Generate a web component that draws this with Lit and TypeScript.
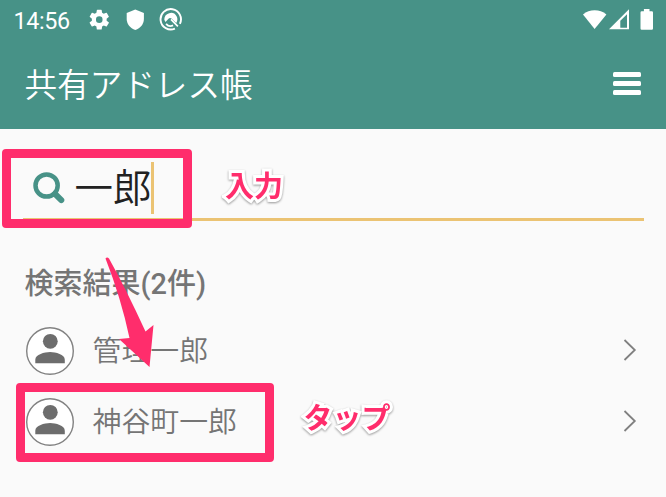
import { LitElement, html, css } from "lit";
import { customElement, property } from "lit/decorators.js";

@customElement("status-bar")
class StatusBar extends LitElement {
  static styles = css`
    :host { display: flex; height: 40px; box-sizing: border-box; align-items: center; padding-left: 13.5px; color: #fff; font: 23.3px "Roboto", sans-serif; }
    .time { width: 75.5px; line-height: 40px; padding-top: 1px; letter-spacing: -0.35px; box-sizing: border-box; }
    svg { display: block; flex: none; }
    .left { width: 93px; height: 40px; }
    .right { width: 76px; height: 40px; margin-left: auto; margin-right: 7px; }
  `;
  render() {
    return html`
      <span class="time">14:56</span>
      <svg class="left" viewBox="89 0 93 40" fill="#fff">
        <g transform="translate(86.9 7.3) scale(1.03)">
          <path d="M19.14 12.94c.04-.3.06-.61.06-.94 0-.32-.02-.64-.07-.94l2.03-1.58a.49.49 0 0 0 .12-.61l-1.92-3.32a.49.49 0 0 0-.59-.22l-2.39.96a7 7 0 0 0-1.62-.94l-.36-2.54a.48.48 0 0 0-.48-.41h-3.84a.47.47 0 0 0-.47.41l-.36 2.54c-.59.24-1.13.57-1.62.94l-2.39-.96a.48.48 0 0 0-.59.22L2.74 8.87a.47.47 0 0 0 .12.61l2.03 1.58c-.05.3-.09.63-.09.94s.02.64.07.94l-2.03 1.58a.49.49 0 0 0-.12.61l1.92 3.32c.12.22.37.29.59.22l2.39-.96c.5.38 1.03.7 1.62.94l.36 2.54c.05.24.24.41.48.41h3.84c.24 0 .44-.17.47-.41l.36-2.54c.59-.24 1.13-.56 1.62-.94l2.39.96c.22.08.47 0 .59-.22l1.92-3.32a.47.47 0 0 0-.12-.61zM12 15.2a3.2 3.2 0 1 1 0-6.4 3.2 3.2 0 0 1 0 6.4z"/>
        </g>
        <path d="M135.3 9.6l8.6 3.4v6c0 5-3.4 9.2-8.6 11-5.2-1.800-8.600-6-8.600-11v-6z"/>
        <path d="M174.900 28.600a10.200 10.200 0 1 1 5-4.800" fill="none" stroke="#fff" stroke-width="1.900"/>
        <path d="M164.300 19.600a6.600 6.600 0 0 1 12.300-3.400c1.300 2.500.9 4.800-.4 6.700l-4.700-4.300c-1-.9-2-.9-3 .1l-3 3.200a6 6 0 0 1-1.200-2.300z"/>
        <path d="M171 19.300l6.900 7M166.100 23.900c1.700 2.100 4.300 2.700 7 1.500" fill="none" stroke="#fff" stroke-width="1.700"/>
      </svg>
      <svg class="right" viewBox="583 0 76 40" fill="#fff">
        <path d="M594.600 29L582.900 14.500a18.500 18.500 0 0 1 23.500 0z"/>
        <path fill-rule="evenodd" d="M609 29.300L629 9.200v20.100zM620.300 20.800v6.900h6.700V14.200z"/>
        <path d="M641.700 11.200h2.200V9h5.600v2.200h2.300a1.200 1.200 0 0 1 1.200 1.200v16.200a1.200 1.200 0 0 1-1.200 1.200h-10.100a1.200 1.200 0 0 1-1.200-1.200V12.400a1.200 1.200 0 0 1 1.200-1.200z"/>
      </svg>`;
  }
}

@customElement("contact-row")
class ContactRow extends LitElement {
  @property() name = "";
  static styles = css`
    :host { display: flex; align-items: center; height: 71.3px; }
    .avatar { width: 48px; height: 48px; flex: none; }
    .name { margin-left: 19px; flex: 1; font-size: 28.9px; line-height: 40px; color: #757575; font-weight: 350; padding-bottom: 1px; }
    .chevron { width: 16px; height: 24px; margin: -2px 7px 0 0; }
  `;
  render() {
    return html`
      <svg class="avatar" viewBox="0 0 48 48">
        <circle cx="24" cy="24" r="23.3" fill="#fff" stroke="#828282" stroke-width="1.4"/>
        <circle cx="24.3" cy="14.3" r="7.4" fill="#6d6d6d"/>
        <path d="M9.300 36.300v-3.600c0-4.900 9.200-7.600 14.800-7.600s14.700 2.700 14.700 7.600v3.600z" fill="#6d6d6d"/>
      </svg>
      <span class="name">${this.name}</span>
      <svg class="chevron" viewBox="0 0 16 24"><path d="M3.500 2l10.300 10L3.500 22" fill="none" stroke="#808080" stroke-width="1.800"/></svg>`;
  }
}

@customElement("app-root")
class AppRoot extends LitElement {
  static styles = css`
    :host { display: block; position: relative; width: 666px; height: 497px; overflow: hidden; background: #fafafa; font-family: "Roboto", "Noto Sans CJK JP", sans-serif; }
    .header { height: 129px; background: #479287; }
    .bar { display: flex; align-items: center; justify-content: space-between; height: 90px; padding: 0 25px 0 24.5px; box-sizing: border-box; color: #fff; }
    .title { font-size: 32.6px; line-height: 48px; font-weight: 350; padding-top: 1px; }
    .menu { display: flex; flex-direction: column; gap: 4px; width: 28.5px; padding-bottom: 3px; }
    .menu i { height: 5px; border-radius: 1.5px; background: #fff; }
    .search { display: flex; align-items: center; height: 92px; margin: 0 22.5px; padding: 28px 0 0 9.5px; box-sizing: border-box; border-bottom: 3.5px solid #ebc373; }
    .glass { width: 34px; height: 34px; margin-right: 8.5px; }
    .query { font-size: 38.5px; line-height: 52px; color: #212121; font-weight: 350; width: 76px; white-space: nowrap; padding-top: 3px; }
    .caret { width: 3px; height: 52px; background: #ebc373; }
    .results { padding: 40px 22px 0 25.5px; }
    .heading { margin: 0 0 0 -1px; height: 54.5px; font-size: 29px; line-height: 46px; font-weight: 500; color: #757575; }
    .frame { position: absolute; box-sizing: border-box; border: 9px solid #ff2d6c; border-radius: 4px; }
    .frame.input { left: 2px; top: 149px; width: 189.5px; height: 79px; }
    .frame.tap { left: 16px; top: 383px; width: 258px; height: 79px; }
    .arrow { position: absolute; left: 100px; top: 250px; width: 60px; height: 120px; }
    .note { position: absolute; font-size: 29px; line-height: 40px; font-weight: 700; color: #ff2d6c; -webkit-text-stroke: 6px #fff; paint-order: stroke fill; stroke-linejoin: round; filter: drop-shadow(0 1.5px 1px rgba(0,0,0,.4)); white-space: nowrap; }
    .note.input { left: 225px; top: 167px; }
    .note.tap { left: 303.5px; top: 399px; }
  `;
  render() {
    return html`
      <div class="header">
        <status-bar></status-bar>
        <div class="bar"><span class="title">共有アドレス帳</span><div class="menu"><i></i><i></i><i></i></div></div>
      </div>
      <div class="search">
        <svg class="glass" viewBox="0 0 34 34" fill="none" stroke="#479287">
          <circle cx="14.6" cy="14.5" r="11.1" stroke-width="4.500"/>
          <path d="M23 22.800l6.300 6.300" stroke-width="6" stroke-linecap="round"/>
        </svg>
        <span class="query">一郎</span><span class="caret"></span>
      </div>
      <div class="results">
        <h2 class="heading">検索結果(2件)</h2>
        ${["管理一郎", "神谷町一郎"].map((n) => html`<contact-row .name=${n}></contact-row>`)}
      </div>
      <div class="frame input"></div>
      <div class="frame tap"></div>
      <svg class="arrow" viewBox="100 250 60 120"><path d="M105.500 258.500q1.500-2.200 3.500 0Q126 289 145.500 331.500l8-6.500-4 42L119 339l10.500-1Q121 298 105.500 258.500z" fill="#ff2d6c"/></svg>
      <span class="note input">入力</span>
      <span class="note tap">タップ</span>`;
  }
}
